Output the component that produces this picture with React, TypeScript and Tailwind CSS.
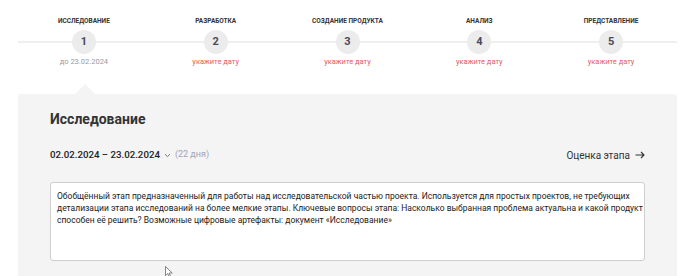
import React from "react";

const steps = [
  { label: "Исследование", date: "до 23.02.2024", set: true },
  { label: "Разработка", date: "укажите дату", set: false },
  { label: "Создание продукта", date: "укажите дату", set: false },
  { label: "Анализ", date: "укажите дату", set: false },
  { label: "Представление", date: "укажите дату", set: false },
];

export default function App() {
  return (
    <div
      className="relative w-[690px] h-[276px] overflow-hidden bg-white text-[#333]"
      style={{ fontFamily: "Roboto, 'Noto Sans', sans-serif" }}
    >
      <div className="ml-[18px] w-[659px]">
        <div className="flex pt-[16px]">
          {steps.map((s, i) => (
            <div key={i} className="flex-1 flex flex-col items-center">
              <div className="h-[10px] leading-[10px] text-[6.5px] font-bold uppercase text-[#333] whitespace-nowrap">
                {s.label}
              </div>
              <div className="mt-[4px] flex items-center w-full">
                <div className="flex-1 h-[2px] bg-[#efefef]" />
                <div className="w-[24px] h-[24px] rounded-full bg-[#ececec] flex items-center justify-center text-[11px] font-bold text-[#4a4a5a]">
                  {i + 1}
                </div>
                <div className="flex-1 h-[2px] bg-[#efefef]" />
              </div>
              <div
                className={`mt-[3px] h-[10px] leading-[10px] text-[7.5px] whitespace-nowrap ${
                  s.set ? "text-[#9a9aa6]" : "text-[#e06060]"
                }`}
              >
                {s.date}
              </div>
            </div>
          ))}
        </div>

        <div className="mt-[17px] ml-[57px] w-0 h-0 border-l-[10px] border-r-[10px] border-b-[10px] border-l-transparent border-r-transparent border-b-[#f4f4f4]" />

        <div className="bg-[#f4f4f4] rounded-tr-[4px] px-[32px] pt-[15px] pb-[20px]">
          <div className="h-[20px] leading-[20px] text-[14px] font-bold text-[#333]">
            Исследование
          </div>
          <div className="mt-[18px] h-[16px] flex items-center justify-between">
            <div className="flex items-center">
              <span className="text-[9.7px] font-medium text-[#222]">
                02.02.2024 – 23.02.2024
              </span>
              <svg width="7" height="5" viewBox="0 0 7 5" className="ml-[4px] mt-[1px]">
                <path d="M1 1.2 L3.5 3.6 L6 1.2" fill="none" stroke="#777" strokeWidth="1" />
              </svg>
              <span className="ml-[4px] text-[9px] text-[#a4a4b4]">(22 дня)</span>
            </div>
            <div className="flex items-center text-[10px] text-[#333]">
              <span>Оценка этапа</span>
              <svg width="10" height="8" viewBox="0 0 10 8" className="ml-[5px]">
                <path d="M0.5 4 H9 M6 1 L9 4 L6 7" fill="none" stroke="#333" strokeWidth="1.1" />
              </svg>
            </div>
          </div>
          <div className="mt-[19px] h-[79px] bg-white border border-[#cfcfcf] rounded-[3px] px-[6px] pt-[7px] text-[8.5px] leading-[12px] text-[#222]">
            <div className="whitespace-nowrap">
              Обобщённый этап предназначенный для работы над исследовательской частью проекта. Используется для простых проектов, не требующих
            </div>
            <div className="whitespace-nowrap">
              детализации этапа исследований на более мелкие этапы. Ключевые вопросы этапа: Насколько выбранная проблема актуальна и какой продукт
            </div>
            <div className="whitespace-nowrap">
              способен её решить? Возможные цифровые артефакты: документ «Исследование»
            </div>
          </div>
        </div>
      </div>

      <svg
        className="absolute left-[165px] top-[266px]"
        width="8"
        height="12"
        viewBox="0 0 8 12"
      >
        <path d="M0.5 0.5 L0.5 9.5 L2.8 7.5 L4.3 11 L5.6 10.4 L4.2 7 L7.2 7 Z" fill="#fff" stroke="#666" strokeWidth="0.8" />
      </svg>
    </div>
  );
}
